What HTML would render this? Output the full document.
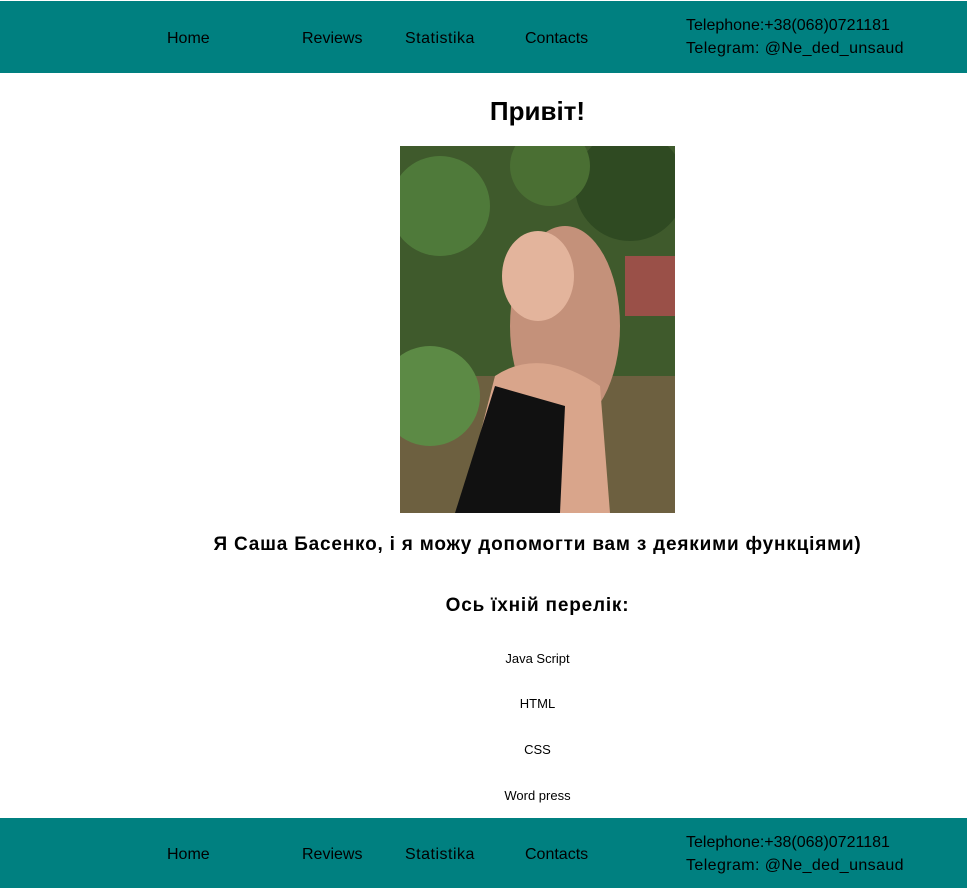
<!DOCTYPE html>
<html><head><meta charset="utf-8"><style>
body{margin:0;width:967px;height:888px;position:relative;background:#fff;font-family:"Comic Sans MS","Liberation Sans","DejaVu Sans",sans-serif;color:#000;overflow:hidden}
.bar{position:absolute;left:0;width:967px;height:72px;background:#008080}
.bar span{position:absolute;font-size:16px;line-height:20px}
.t{position:absolute;left:0;width:1075px;text-align:center;font-weight:bold}
.s{position:absolute;left:0;width:1075px;text-align:center;font-size:13px}
</style></head><body>
<div class="bar" style="top:1px">
<span style="left:167px;top:28px">Home</span>
<span style="left:302px;top:28px">Reviews</span>
<span style="left:405px;top:28px;letter-spacing:0.5px">Statistika</span>
<span style="left:525px;top:28px">Contacts</span>
<span style="left:686px;top:15px">Telephone:+38(068)0721181</span>
<span style="left:686px;top:38px;letter-spacing:0.4px">Telegram: @Ne_ded_unsaud</span>
</div>
<div class="t" style="top:96px;font-size:26px">Привіт!</div>
<svg style="position:absolute;left:400px;top:146px" width="275" height="367">
<rect width="275" height="367" fill="#3f5a2c"/>
<rect y="230" width="275" height="137" fill="#6d6040"/>
<circle cx="40" cy="60" r="50" fill="#4f7a3a"/><circle cx="230" cy="40" r="55" fill="#2f4a22"/>
<circle cx="30" cy="250" r="50" fill="#5c8a45"/><circle cx="150" cy="20" r="40" fill="#4a6f33"/>
<rect x="225" y="110" width="50" height="60" fill="#9a5048"/>
<ellipse cx="165" cy="180" rx="55" ry="100" fill="#c4917a"/>
<ellipse cx="138" cy="130" rx="36" ry="45" fill="#e3b49c"/>
<path d="M95 230 Q140 200 200 240 L210 367 L60 367 Z" fill="#d9a58b"/>
<path d="M95 240 L165 260 L160 367 L55 367 Z" fill="#111"/>
</svg>
<div class="t" style="top:534px;font-size:19px;letter-spacing:0.8px">Я Саша Басенко, і я можу допомогти вам з деякими функціями)</div>
<div class="t" style="top:595px;font-size:19px;letter-spacing:0.8px">Ось їхній перелік:</div>
<div class="s" style="top:651px">Java Script</div>
<div class="s" style="top:696px">HTML</div>
<div class="s" style="top:742px">CSS</div>
<div class="s" style="top:788px">Word press</div>
<div class="bar" style="top:818px;height:70px">
<span style="left:167px;top:27px">Home</span>
<span style="left:302px;top:27px">Reviews</span>
<span style="left:405px;top:27px;letter-spacing:0.5px">Statistika</span>
<span style="left:525px;top:27px">Contacts</span>
<span style="left:686px;top:15px">Telephone:+38(068)0721181</span>
<span style="left:686px;top:38px;letter-spacing:0.4px">Telegram: @Ne_ded_unsaud</span>
</div>
</body></html>
